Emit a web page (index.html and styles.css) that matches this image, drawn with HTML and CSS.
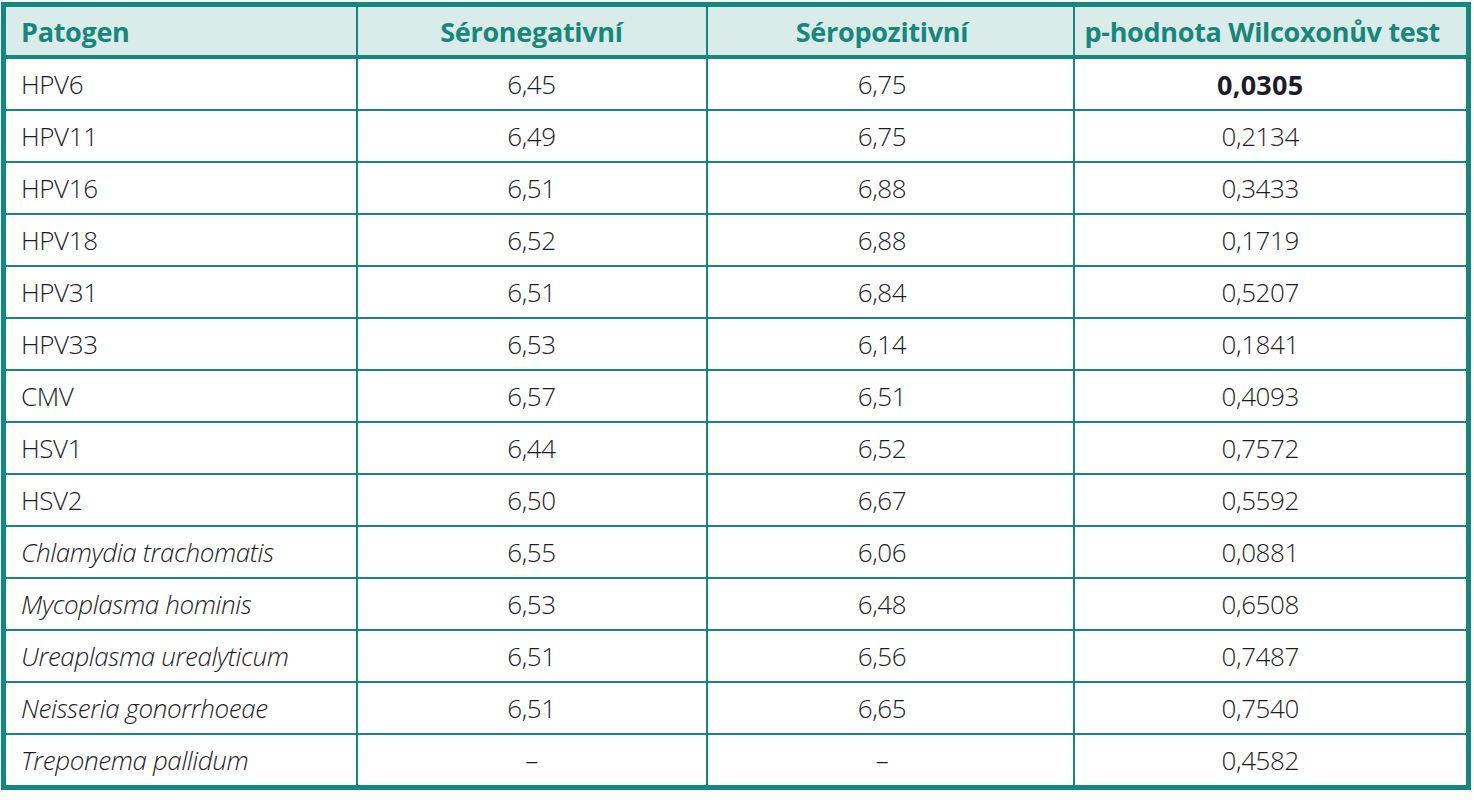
FILE: index.html
```html
<!DOCTYPE html>
<html lang="cs">
<head>
<meta charset="utf-8">
<title>Tabulka</title>
<link rel="stylesheet" href="styles.css">
</head>
<body>
<table class="data">
  <colgroup>
    <col class="c1"><col class="c2"><col class="c3"><col class="c4">
  </colgroup>
  <thead>
    <tr>
      <th class="left">Patogen</th>
      <th>Séronegativní</th>
      <th class="k3">Séropozitivní</th>
      <th class="k4">p-hodnota Wilcoxonův test</th>
    </tr>
  </thead>
  <tbody>
    <tr><td class="left">HPV6</td><td>6,45</td><td class="k3">6,75</td><td class="k4 strong">0,0305</td></tr>
    <tr><td class="left">HPV11</td><td>6,49</td><td class="k3">6,75</td><td class="k4">0,2134</td></tr>
    <tr><td class="left">HPV16</td><td>6,51</td><td class="k3">6,88</td><td class="k4">0,3433</td></tr>
    <tr><td class="left">HPV18</td><td>6,52</td><td class="k3">6,88</td><td class="k4">0,1719</td></tr>
    <tr><td class="left">HPV31</td><td>6,51</td><td class="k3">6,84</td><td class="k4">0,5207</td></tr>
    <tr><td class="left">HPV33</td><td>6,53</td><td class="k3">6,14</td><td class="k4">0,1841</td></tr>
    <tr><td class="left">CMV</td><td>6,57</td><td class="k3">6,51</td><td class="k4">0,4093</td></tr>
    <tr><td class="left">HSV1</td><td>6,44</td><td class="k3">6,52</td><td class="k4">0,7572</td></tr>
    <tr><td class="left">HSV2</td><td>6,50</td><td class="k3">6,67</td><td class="k4">0,5592</td></tr>
    <tr><td class="left it">Chlamydia trachomatis</td><td>6,55</td><td class="k3">6,06</td><td class="k4">0,0881</td></tr>
    <tr><td class="left it">Mycoplasma hominis</td><td>6,53</td><td class="k3">6,48</td><td class="k4">0,6508</td></tr>
    <tr><td class="left it">Ureaplasma urealyticum</td><td>6,51</td><td class="k3">6,56</td><td class="k4">0,7487</td></tr>
    <tr><td class="left it">Neisseria gonorrhoeae</td><td>6,51</td><td class="k3">6,65</td><td class="k4">0,7540</td></tr>
    <tr><td class="left it">Treponema pallidum</td><td>–</td><td class="k3">–</td><td class="k4">0,4582</td></tr>
  </tbody>
</table>
</body>
</html>
```
FILE: styles.css
```css
html, body {
  margin: 0;
  background: #ffffff;
}
body {
  padding: 2px 1px;
  font-family: "Open Sans", "Noto Sans", sans-serif;
}
.data {
  border-collapse: collapse;
  width: 1465px;
  table-layout: fixed;
  border: 5px solid #12897f;
}
.c1 { width: 353px; }
.c2 { width: 350px; }
.c3 { width: 367px; }
.c4 { width: 395px; }
.data th {
  background: #d9ecea;
  color: #17877b;
  font-weight: 700;
  font-size: 27px;
  height: 48px;
  padding: 0 10px;
  text-align: center;
  border-left: 2px solid #12897f;
  border-bottom: 4px solid #12897f;
  letter-spacing: -0.3px;
  white-space: nowrap;
}
.data td {
  color: #1c1c28;
  font-size: 26px;
  font-weight: 300;
  height: 50px;
  padding: 0 10px;
  text-align: center;
  border-left: 2px solid #12897f;
  border-top: 2px solid #12897f;
  letter-spacing: -0.4px;
}
.data .left {
  text-align: left;
  padding-left: 15px;
}
.data .k3 {
  padding-right: 26px;
}
.data .k4 {
  padding-right: 30px;
}
.data .it {
  font-style: italic;
}
.data .strong {
  font-weight: 700;
  letter-spacing: 0.3px;
  font-size: 27px;
}
```
